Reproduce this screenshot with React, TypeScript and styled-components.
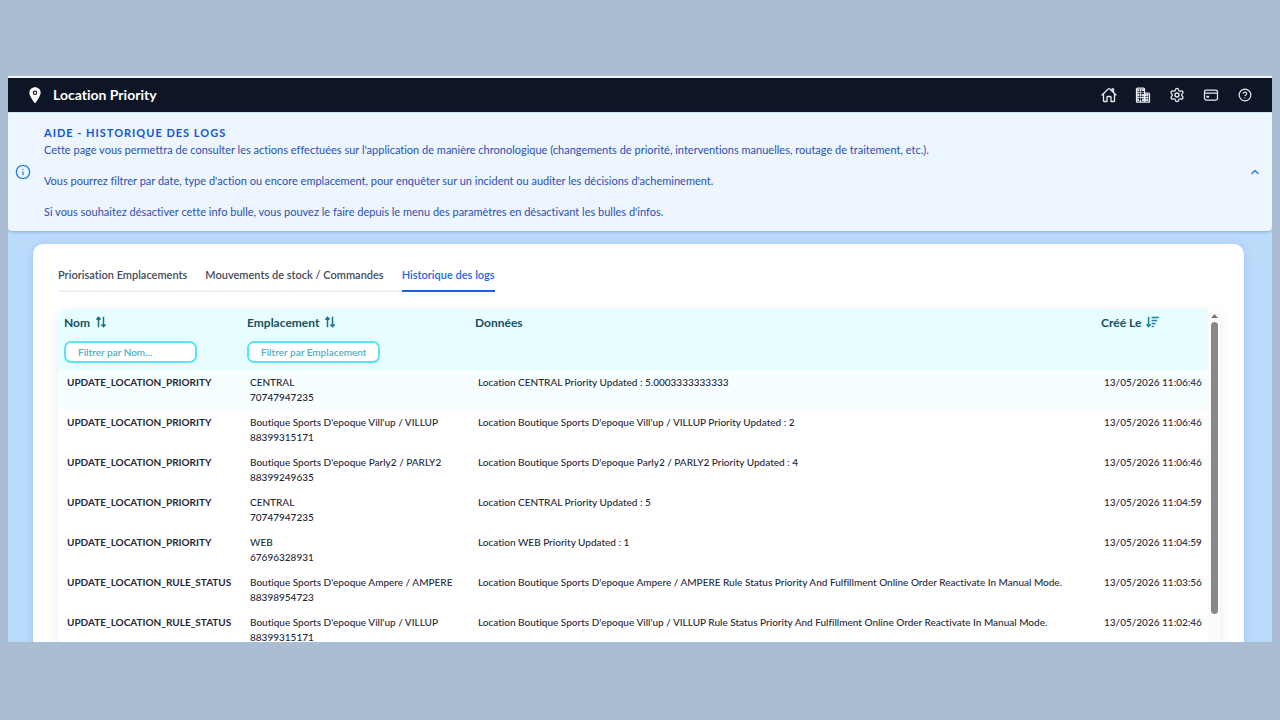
import React from "react";
import styled, { createGlobalStyle } from "styled-components";
import { IoLocation, IoHomeOutline, IoBusinessOutline, IoCardOutline } from "react-icons/io5";
import { Settings, CircleQuestionMark, Info, ChevronUp } from "lucide-react";

const GlobalStyle = createGlobalStyle`
  * {
    box-sizing: border-box;
  }
  body {
    margin: 0;
    font-family: Lato, "Open Sans", sans-serif;
    font-variant-ligatures: none;
    background: #aabdd2;
  }
`;

const Page = styled.div`
  display: flex;
  height: 100vh;
  padding: 76px 8px 78px;
`;

const AppWindow = styled.div`
  display: flex;
  flex: 1;
  min-width: 0;
  flex-direction: column;
  overflow: hidden;
  border-top: 2px solid #f3f6f9;
  background: #bbdbfb;
`;

const TopBar = styled.header`
  display: flex;
  flex: none;
  align-items: center;
  justify-content: space-between;
  height: 34px;
  padding: 0 19px 0 18px;
  background: #0d1526;
  color: #fff;
`;

const Brand = styled.div`
  display: flex;
  align-items: center;
  gap: 9px;
`;

const BrandTitle = styled.h1`
  margin: 0;
  font-size: 14px;
  font-weight: 700;
  line-height: 20px;
`;

const TopNav = styled.nav`
  display: flex;
  gap: 18px;
`;

const IconButton = styled.button<{ $color?: string }>`
  display: flex;
  flex: none;
  align-items: center;
  justify-content: center;
  width: 16px;
  height: 16px;
  padding: 0;
  border: 0;
  background: none;
  color: ${(p) => p.$color || "#e8ebef"};
  cursor: pointer;
`;

const HomeIcon = styled(IoHomeOutline)`
  path {
    stroke-width: 42px;
  }
`;

const BuildingIcon = styled(IoBusinessOutline)`
  path {
    stroke-width: 40px;
  }
`;

const CardIcon = styled(IoCardOutline)`
  rect,
  path {
    stroke-width: 40px;
  }
`;

const HelpBanner = styled.section`
  position: relative;
  display: flex;
  flex: none;
  align-items: center;
  padding: 10px 9px 11px 7px;
  border-top: 1px solid #cfe3f8;
  border-radius: 0 0 4px 4px;
  background: #edf5fe;
  color: #2a7de8;
  box-shadow: 0 1px 3px rgba(40, 80, 130, 0.35);
`;

const HelpBody = styled.div`
  flex: 1;
  padding-left: 13px;
`;

const HelpTitle = styled.h2`
  margin: 0;
  color: #1256d6;
  font-size: 11px;
  font-weight: 700;
  line-height: 19px;
  letter-spacing: 1px;
`;

const HelpText = styled.p`
  margin: 0 0 15px;
  color: #2b50b0;
  font-size: 11px;
  line-height: 16px;

  &:last-child {
    margin-bottom: 0;
  }
`;

const Card = styled.main`
  flex: 1 0 auto;
  margin: 13px 28px 0 25px;
  padding: 16px 24px 0 25px;
  border-radius: 10px 10px 0 0;
  background: #fff;
  box-shadow: 0 2px 8px rgba(60, 120, 190, 0.25);
`;

const TabList = styled.div`
  display: flex;
  width: max-content;
  gap: 18px;
  box-shadow: inset 0 -2px 0 #f0f1f5;
`;

const Tab = styled.button<{ $active?: boolean }>`
  height: 32px;
  padding: 0 0 1px;
  border: 0;
  border-bottom: 2px solid ${(p) => (p.$active ? "#1a5fe0" : "transparent")};
  background: none;
  color: ${(p) => (p.$active ? "#1f66e5" : "#454c59")};
  font: inherit;
  font-size: 11px;
  font-weight: 600;
  line-height: 28px;
  white-space: nowrap;
  cursor: pointer;
`;

const TableFrame = styled.div`
  display: flex;
  height: 360px;
  margin-top: 17px;
  overflow: hidden;
  border-radius: 8px 0 0 0;
  box-shadow: 0 4px 14px rgba(0, 0, 0, 0.08);
`;

const LogTable = styled.table`
  flex: 1;
  min-width: 0;
  align-self: flex-start;
  border-collapse: collapse;
  table-layout: fixed;
  color: #1f2937;
  font-size: 10px;
  line-height: 15px;
`;

const HeadCell = styled.th<{ $width?: number }>`
  width: ${(p) => (p.$width ? `${p.$width}px` : "auto")};
  height: 61px;
  padding: 5px 6px 7px;
  background: #e8fdff;
  color: #16505f;
  font-size: 12px;
  font-weight: 700;
  text-align: left;
  vertical-align: top;
`;

const HeadLabel = styled.div`
  display: flex;
  align-items: center;
  gap: 5px;
  height: 16px;
  margin-bottom: 11px;
  white-space: nowrap;
`;

const FilterInput = styled.input`
  display: block;
  width: 133px;
  height: 22px;
  padding: 0 12px;
  border: 2px solid #5ce4f3;
  border-radius: 7px;
  background: #fff;
  color: #16505f;
  font: inherit;
  font-size: 10px;
  font-weight: 600;

  &::placeholder {
    color: #4fb0c6;
    opacity: 1;
  }
`;

const Row = styled.tr<{ $highlight?: boolean }>`
  height: 40px;
  background: ${(p) => (p.$highlight ? "#f7feff" : "#fff")};
`;

const Cell = styled.td<{ $strong?: boolean }>`
  padding: 5px 0 5px 9px;
  font-weight: ${(p) => (p.$strong ? 700 : 500)};
  vertical-align: top;
  white-space: nowrap;
`;

const ScrollTrack = styled.div`
  display: flex;
  flex: none;
  flex-direction: column;
  align-items: center;
  gap: 4px;
  width: 12px;
  padding-top: 5px;
  background: #fcfcfc;
`;

const ScrollArrow = styled.svg`
  display: block;
  width: 7px;
  height: 4px;
`;

const ScrollThumb = styled.div`
  width: 7px;
  height: 292px;
  border-radius: 4px;
  background: #888;
`;

const SortBoth = () => (
  <svg width="12" height="12" viewBox="0 0 12 12" fill="none" stroke="#1b7286" strokeWidth="1.5">
    <path d="M3.5 11.2V1.5M1.4 3.6 3.5 1.4 5.6 3.6M8.5.8v9.7M6.4 8.4l2.1 2.2 2.1-2.2" />
  </svg>
);

const SortDescending = () => (
  <svg width="13" height="12" viewBox="0 0 13 12" fill="none" stroke="#1b8299" strokeWidth="1.5">
    <path d="M2.6 1v9.5M.6 8.3l2 2.3 2-2.3M5.6 1.5h7.2M5.6 4.5h5.6M5.6 7.5h3.9M5.6 10.5h2.2" />
  </svg>
);

const NAV = [
  { label: "Accueil", icon: <HomeIcon size={16} /> },
  { label: "Emplacements", icon: <BuildingIcon size={16} /> },
  { label: "Paramètres", icon: <Settings size={16} strokeWidth={2} /> },
  { label: "Facturation", icon: <CardIcon size={16} /> },
  { label: "Aide", icon: <CircleQuestionMark size={14} strokeWidth={2} /> },
];

const TABS = ["Priorisation Emplacements", "Mouvements de stock / Commandes", "Historique des logs"];

const LOGS = [
  ["UPDATE_LOCATION_PRIORITY", "CENTRAL", "70747947235", "Location CENTRAL Priority Updated : 5.0003333333333", "13/05/2026 11:06:46"],
  ["UPDATE_LOCATION_PRIORITY", "Boutique Sports D'epoque Vill'up / VILLUP", "88399315171", "Location Boutique Sports D'epoque Vill'up / VILLUP Priority Updated : 2", "13/05/2026 11:06:46"],
  ["UPDATE_LOCATION_PRIORITY", "Boutique Sports D'epoque Parly2 / PARLY2", "88399249635", "Location Boutique Sports D'epoque Parly2 / PARLY2 Priority Updated : 4", "13/05/2026 11:06:46"],
  ["UPDATE_LOCATION_PRIORITY", "CENTRAL", "70747947235", "Location CENTRAL Priority Updated : 5", "13/05/2026 11:04:59"],
  ["UPDATE_LOCATION_PRIORITY", "WEB", "67696328931", "Location WEB Priority Updated : 1", "13/05/2026 11:04:59"],
  ["UPDATE_LOCATION_RULE_STATUS", "Boutique Sports D'epoque Ampere / AMPERE", "88398954723", "Location Boutique Sports D'epoque Ampere / AMPERE Rule Status Priority And Fulfillment Online Order Reactivate In Manual Mode.", "13/05/2026 11:03:56"],
  ["UPDATE_LOCATION_RULE_STATUS", "Boutique Sports D'epoque Vill'up / VILLUP", "88399315171", "Location Boutique Sports D'epoque Vill'up / VILLUP Rule Status Priority And Fulfillment Online Order Reactivate In Manual Mode.", "13/05/2026 11:02:46"],
];

export default function App() {
  return (
    <Page>
      <GlobalStyle />
      <AppWindow>
        <TopBar>
          <Brand>
            <IoLocation size={18} />
            <BrandTitle>Location Priority</BrandTitle>
          </Brand>
          <TopNav>
            {NAV.map(({ label, icon }) => (
              <IconButton key={label} type="button" aria-label={label}>
                {icon}
              </IconButton>
            ))}
          </TopNav>
        </TopBar>

        <HelpBanner>
          <Info size={16} strokeWidth={2} />
          <HelpBody>
            <HelpTitle>AIDE - HISTORIQUE DES LOGS</HelpTitle>
            <HelpText>
              Cette page vous permettra de consulter les actions effectuées sur l'application de manière chronologique
              (changements de priorité, interventions manuelles, routage de traitement, etc.).
            </HelpText>
            <HelpText>
              Vous pourrez filtrer par date, type d'action ou encore emplacement, pour enquêter sur un incident ou
              auditer les décisions d'acheminement.
            </HelpText>
            <HelpText>
              Si vous souhaitez désactiver cette info bulle, vous pouvez le faire depuis le menu des paramètres en
              désactivant les bulles d'infos.
            </HelpText>
          </HelpBody>
          <IconButton type="button" aria-label="Replier" $color="#2a7de8">
            <ChevronUp size={12} strokeWidth={3} />
          </IconButton>
        </HelpBanner>

        <Card>
          <TabList role="tablist">
            {TABS.map((tab, i) => (
              <Tab key={tab} type="button" role="tab" aria-selected={i === 2} $active={i === 2}>
                {tab}
              </Tab>
            ))}
          </TabList>

          <TableFrame>
            <LogTable>
              <thead>
                <tr>
                  <HeadCell $width={183}>
                    <HeadLabel>
                      Nom <SortBoth />
                    </HeadLabel>
                    <FilterInput aria-label="Filtrer par Nom" placeholder="Filtrer par Nom..." />
                  </HeadCell>
                  <HeadCell $width={228}>
                    <HeadLabel>
                      Emplacement <SortBoth />
                    </HeadLabel>
                    <FilterInput aria-label="Filtrer par Emplacement" placeholder="Filtrer par Emplacement..." />
                  </HeadCell>
                  <HeadCell>
                    <HeadLabel>Données</HeadLabel>
                  </HeadCell>
                  <HeadCell $width={113}>
                    <HeadLabel>
                      Créé Le <SortDescending />
                    </HeadLabel>
                  </HeadCell>
                </tr>
              </thead>
              <tbody>
                {LOGS.map(([name, place, id, data, date], i) => (
                  <Row key={i} $highlight={i === 0}>
                    <Cell $strong>{name}</Cell>
                    <Cell>
                      {place}
                      <br />
                      {id}
                    </Cell>
                    <Cell>{data}</Cell>
                    <Cell>{date}</Cell>
                  </Row>
                ))}
              </tbody>
            </LogTable>
            <ScrollTrack>
              <ScrollArrow viewBox="0 0 7 4">
                <path d="M3.5 0 7 4H0Z" fill="#777" />
              </ScrollArrow>
              <ScrollThumb />
            </ScrollTrack>
          </TableFrame>
        </Card>
      </AppWindow>
    </Page>
  );
}
